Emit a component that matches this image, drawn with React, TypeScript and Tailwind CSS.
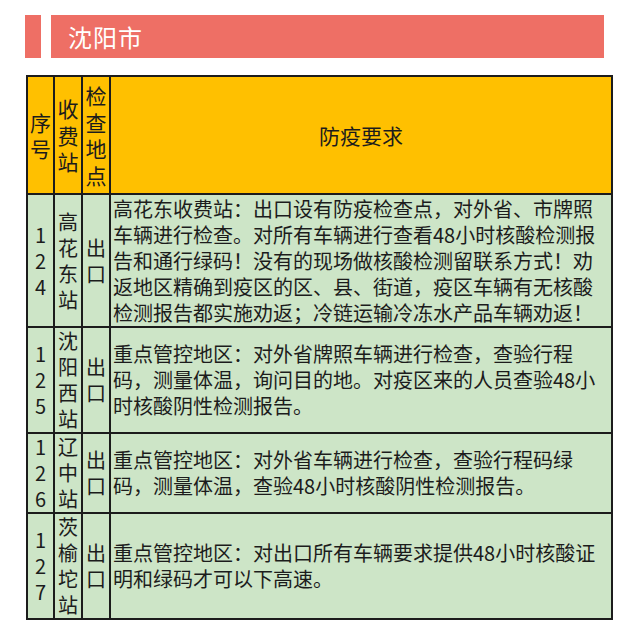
const rows = [
  {
    no: ["1", "2", "4"],
    station: ["高", "花", "东", "站"],
    place: ["出", "口"],
    lines: [
      "高花东收费站：出口设有防疫检查点，对外省、市牌照",
      "车辆进行检查。对所有车辆进行查看48小时核酸检测报",
      "告和通行绿码！没有的现场做核酸检测留联系方式！劝",
      "返地区精确到疫区的区、县、街道，疫区车辆有无核酸",
      "检测报告都实施劝返；冷链运输冷冻水产品车辆劝返！",
    ],
    height: "h-[131px]",
    top: true,
  },
  {
    no: ["1", "2", "5"],
    station: ["沈", "阳", "西", "站"],
    place: ["出", "口"],
    lines: [
      "重点管控地区：对外省牌照车辆进行检查，查验行程",
      "码，测量体温，询问目的地。对疫区来的人员查验48小",
      "时核酸阴性检测报告。",
    ],
    height: "h-[105px]",
    top: false,
  },
  {
    no: ["1", "2", "6"],
    station: ["辽", "中", "站"],
    place: ["出", "口"],
    lines: [
      "重点管控地区：对外省车辆进行检查，查验行程码绿",
      "码，测量体温，查验48小时核酸阴性检测报告。",
    ],
    height: "h-[80px]",
    top: false,
  },
  {
    no: ["1", "2", "7"],
    station: ["茨", "榆", "坨", "站"],
    place: ["出", "口"],
    lines: [
      "重点管控地区：对出口所有车辆要求提供48小时核酸证",
      "明和绿码才可以下高速。",
    ],
    height: "h-[106px]",
    top: false,
  },
]

function Stack({ chars }: { chars: string[] }) {
  return (
    <div className="flex flex-col items-center">
      {chars.map((c, i) => (
        <span key={i} className="block">
          {c}
        </span>
      ))}
    </div>
  )
}

export default function App() {
  return (
    <div
      className="w-[640px] h-[640px] bg-white text-[#1c1c1c]"
      style={{ fontFamily: '"Noto Sans CJK SC", "Noto Sans", sans-serif' }}
    >
      {/* Title banner */}
      <div className="flex pt-[15px] pl-[25px] gap-[10px]">
        <div className="w-[16px] h-[43px] bg-[#ee6f65]" />
        <div className="w-[553px] h-[43px] bg-[#ee6f65] flex items-center pl-[17px]">
          <span className="text-white text-[24px] leading-none tracking-[1px]">沈阳市</span>
        </div>
      </div>

      {/* Table */}
      <div className="pl-[26px] pt-[17px]">
        <table className="w-[587px] table-fixed border-collapse border-2 border-[#1c1c1c]">
          <colgroup>
            <col className="w-[27px]" />
            <col className="w-[28px]" />
            <col className="w-[28px]" />
            <col />
          </colgroup>
          <thead>
            <tr className="h-[118px] bg-[#ffc000] text-[21px] leading-[26.5px]">
              <th className="border-2 border-[#1c1c1c] font-normal align-middle p-0">
                <Stack chars={["序", "号"]} />
              </th>
              <th className="border-2 border-[#1c1c1c] font-normal align-middle p-0">
                <Stack chars={["收", "费", "站"]} />
              </th>
              <th className="border-2 border-[#1c1c1c] font-normal align-middle p-0">
                <Stack chars={["检", "查", "地", "点"]} />
              </th>
              <th className="border-2 border-[#1c1c1c] font-normal align-middle text-[21px]">防疫要求</th>
            </tr>
          </thead>
          <tbody>
            {rows.map((row) => (
              <tr key={row.no.join("")} className={`${row.height} bg-[#cde5c7] text-[20px] leading-[26px]`}>
                <td className="border-2 border-[#1c1c1c] align-middle p-0">
                  <Stack chars={row.no} />
                </td>
                <td className="border-2 border-[#1c1c1c] align-middle p-0">
                  <Stack chars={row.station} />
                </td>
                <td className="border-2 border-[#1c1c1c] align-middle p-0">
                  <Stack chars={row.place} />
                </td>
                <td
                  className={`border-2 border-[#1c1c1c] pl-[2px] pr-0 ${
                    row.top ? "align-top pt-[1px] pb-0" : "align-middle py-0"
                  }`}
                >
                  {row.lines.map((line) => (
                    <div key={line} className="whitespace-nowrap">
                      {line}
                    </div>
                  ))}
                </td>
              </tr>
            ))}
          </tbody>
        </table>
      </div>
    </div>
  )
}
